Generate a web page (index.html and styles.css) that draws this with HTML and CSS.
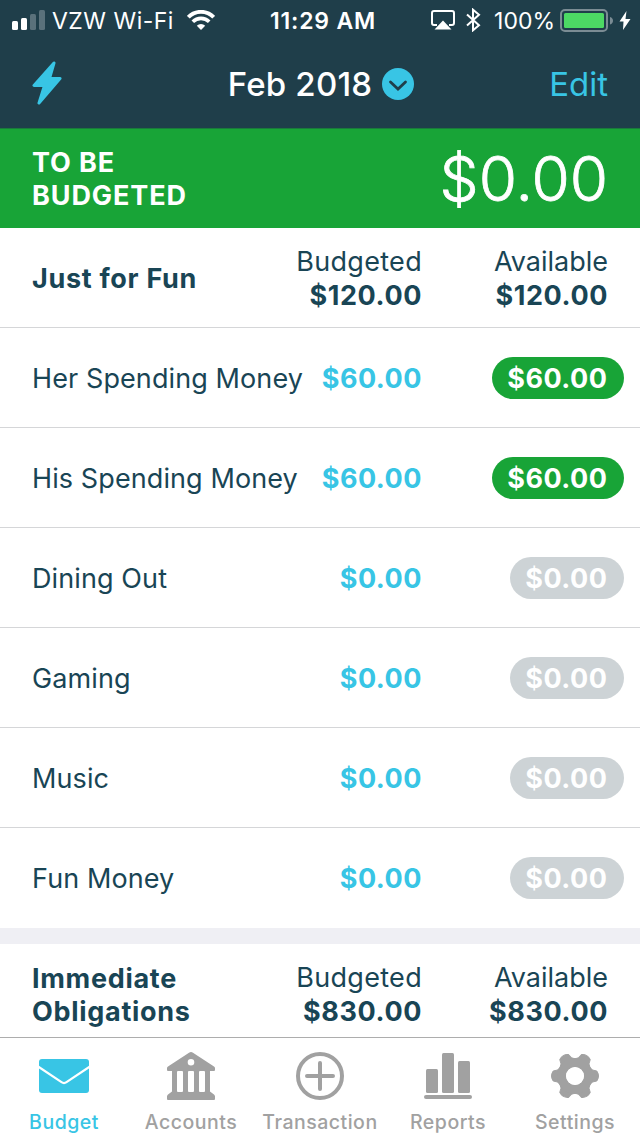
FILE: index.html
```html
<!DOCTYPE html>
<html lang="en">

<head>
    <meta charset="UTF-8">
    <meta name="viewport" content="width=device-width, initial-scale=1.0">
    <title>Budget</title>
    <link rel="stylesheet" href="styles.css">
</head>

<body>
    <div class="app">
        <header class="top">
            <div class="status">
                <div class="status-left">
                    <svg class="signal" width="34" height="20" viewBox="0 0 34 20">
                        <rect x="0" y="11" width="6" height="9" rx="1.5" fill="#fff" />
                        <rect x="9" y="8" width="6" height="12" rx="1.5" fill="#fff" />
                        <rect x="18" y="4" width="6" height="16" rx="1.5" fill="#5a717b" />
                        <rect x="27" y="0" width="6" height="20" rx="1.5" fill="#5a717b" />
                    </svg>
                    <span class="carrier">VZW Wi-Fi</span>
                    <svg class="wifi" width="28" height="20" viewBox="0 0 28 20">
                        <path d="M1.300 7.200a17.800 17.800 0 0 1 25.400 0" fill="none" stroke="#fff" stroke-width="4" />
                        <path d="M5.800 11.800a11.500 11.500 0 0 1 16.400 0" fill="none" stroke="#fff" stroke-width="3.600" />
                        <path d="M14 20l-4.200-4.300a6 6 0 0 1 8.400 0z" fill="#fff" />
                    </svg>
                </div>
                <span class="clock">11:29 AM</span>
                <div class="status-right">
                    <svg class="airplay" width="24" height="20" viewBox="0 0 24 20">
                        <path d="M6 15H3a2 2 0 0 1-2-2V3a2 2 0 0 1 2-2h18a2 2 0 0 1 2 2v10a2 2 0 0 1-2 2h-3" fill="none" stroke="#fff" stroke-width="2" />
                        <path d="M12 10.500l8.500 9H3.500z" fill="#fff" />
                    </svg>
                    <svg class="bluetooth" width="15" height="24" viewBox="0 0 15 24">
                        <path d="M1 6.500l12 10.800-6 5V1.700l6 5L1 17.500" fill="none" stroke="#fff" stroke-width="2" />
                    </svg>
                    <span class="percent">100%</span>
                    <svg class="battery" width="54" height="23" viewBox="0 0 54 23">
                        <rect x="1" y="1" width="46" height="21" rx="4" fill="none" stroke="#7b8c94" stroke-width="2" />
                        <rect x="4" y="4" width="40" height="15" rx="1.500" fill="#4cd964" />
                        <path d="M50 8c4 1 4 6.500 0 7.500z" fill="#7b8c94" />
                    </svg>
                    <svg class="charge" width="12" height="19" viewBox="0 0 12 19">
                        <path d="M7.500 0L.5 10.500h4L4 19l7.500-11h-5z" fill="#fff" />
                    </svg>
                </div>
            </div>
            <nav class="nav">
                <svg class="bolt" width="30" height="44" viewBox="0 0 30 44">
                    <path d="M22 2L2 24.500h10.500L7 42l21-24.500H17.500L22 2z" fill="#38c5e5" stroke="#38c5e5" stroke-width="3" stroke-linejoin="round" />
                </svg>
                <div class="month">
                    <span>Feb 2018</span>
                    <svg width="32" height="32" viewBox="0 0 32 32">
                        <circle cx="16" cy="16" r="16" fill="#38c5e5" />
                        <path d="M8.500 14l7.500 7 7.500-7" fill="none" stroke="#1f3e4a" stroke-width="2.800" stroke-linecap="round" />
                    </svg>
                </div>
                <span class="edit">Edit</span>
            </nav>
        </header>

        <section class="banner">
            <div class="banner-label">TO BE<br>BUDGETED</div>
            <div class="banner-amount">$0.00</div>
        </section>

        <main class="list">
            <section class="group">
                <div class="row head">
                    <div class="name">Just for Fun</div>
                    <div class="budgeted"><span>Budgeted</span><b>$120.00</b></div>
                    <div class="available"><span>Available</span><b>$120.00</b></div>
                </div>
                <div class="row">
                    <div class="name">Her Spending Money</div>
                    <div class="budgeted">$60.00</div>
                    <div class="available"><span class="pill green">$60.00</span></div>
                </div>
                <div class="row">
                    <div class="name">His Spending Money</div>
                    <div class="budgeted">$60.00</div>
                    <div class="available"><span class="pill green">$60.00</span></div>
                </div>
                <div class="row">
                    <div class="name">Dining Out</div>
                    <div class="budgeted">$0.00</div>
                    <div class="available"><span class="pill">$0.00</span></div>
                </div>
                <div class="row">
                    <div class="name">Gaming</div>
                    <div class="budgeted">$0.00</div>
                    <div class="available"><span class="pill">$0.00</span></div>
                </div>
                <div class="row">
                    <div class="name">Music</div>
                    <div class="budgeted">$0.00</div>
                    <div class="available"><span class="pill">$0.00</span></div>
                </div>
                <div class="row">
                    <div class="name">Fun Money</div>
                    <div class="budgeted">$0.00</div>
                    <div class="available"><span class="pill">$0.00</span></div>
                </div>
            </section>
            <section class="group">
                <div class="row head">
                    <div class="name">Immediate<br>Obligations</div>
                    <div class="budgeted"><span>Budgeted</span><b>$830.00</b></div>
                    <div class="available"><span>Available</span><b>$830.00</b></div>
                </div>
            </section>
        </main>

        <footer class="tabs">
            <div class="tab active">
                <svg width="50" height="50" viewBox="0 0 50 50">
                    <rect x="0" y="8" width="50" height="34" rx="3" fill="currentColor" />
                    <path d="M-1 15.500L22.500 31.200q2.500 1.800 5 0L51 15.500" fill="none" stroke="#fff" stroke-width="2.200" />
                </svg>
                <span>Budget</span>
            </div>
            <div class="tab">
                <svg width="50" height="50" viewBox="0 0 50 50">
                    <path fill="currentColor" fill-rule="evenodd" d="M25 1q1 0 2 .7L48 15.500q1 .7 1 1.500v2q0 1-1 1h-4v20.500l4 3q1 .8 1 2V48q0 1-1 1H2q-1 0-1-1v-2.500q0-1.200 1-2l4-3V20H2q-1 0-1-1v-2q0-.8 1-1.500L23 1.700q1-.7 2-.7zM25 8a3.300 3.300 0 1 0 0 6.600A3.300 3.300 0 0 0 25 8zM12 20q-1 0-1 1v19q0 1 1 1h4q1 0 1-1V21q0-1-1-1zM23 20q-1 0-1 1v19q0 1 1 1h4q1 0 1-1V21q0-1-1-1zM34 20q-1 0-1 1v19q0 1 1 1h4q1 0 1-1V21q0-1-1-1z" />
                </svg>
                <span>Accounts</span>
            </div>
            <div class="tab">
                <svg width="50" height="50" viewBox="0 0 50 50">
                    <circle cx="25" cy="25" r="22" fill="none" stroke="currentColor" stroke-width="4" />
                    <path d="M25 12v26M12 25h26" stroke="currentColor" stroke-width="4" stroke-linecap="round" />
                </svg>
                <span>Transaction</span>
            </div>
            <div class="tab">
                <svg width="50" height="50" viewBox="0 0 50 50" fill="currentColor">
                    <rect x="3" y="18" width="12" height="24" rx="1.500" />
                    <rect x="19" y="2" width="12" height="40" rx="1.500" />
                    <rect x="35" y="10" width="12" height="32" rx="1.500" />
                    <rect x="1" y="44" width="48" height="4" rx="2" />
                </svg>
                <span>Reports</span>
            </div>
            <div class="tab">
                <svg width="50" height="50" viewBox="0 0 50 50">
                    <defs>
                        <path id="tooth" d="M15.500 11l3.500-3.500 1-4.300q2.500-1.700 5-1.700t5 1.700l1 4.300 3.500 3.500z" stroke-width="1" stroke-linejoin="round" />
                    </defs>
                    <g fill="currentColor" stroke="currentColor">
                        <use href="#tooth" transform="rotate(30 25 25)" />
                        <use href="#tooth" transform="rotate(90 25 25)" />
                        <use href="#tooth" transform="rotate(150 25 25)" />
                        <use href="#tooth" transform="rotate(210 25 25)" />
                        <use href="#tooth" transform="rotate(270 25 25)" />
                        <use href="#tooth" transform="rotate(330 25 25)" />
                    </g>
                    <circle cx="25" cy="25" r="13.300" fill="none" stroke="currentColor" stroke-width="9" />
                    <circle cx="25" cy="25" r="9" fill="#fff" />
                </svg>
                <span>Settings</span>
            </div>
        </footer>
    </div>
</body>

</html>
```
FILE: styles.css
```css
* {
    box-sizing: border-box;
}

body {
    margin: 0;
    font-family: Inter, "Liberation Sans", sans-serif;
    color: #194555;
    background-color: #fff;
}

svg {
    display: block;
    flex-shrink: 0;
}

.app {
    width: 640px;
    height: 1136px;
    display: flex;
    flex-direction: column;
    overflow: hidden;
}

/* header */
.top {
    height: 128px;
    background-color: #1f3e4a;
    color: #fff;
}

.status {
    height: 40px;
    display: grid;
    grid-template-columns: 1fr auto 1fr;
    align-items: center;
    font-size: 23px;
    line-height: 40px;
    padding: 0 9px 0 12px;
}

.status span {
    padding-top: 2px;
    line-height: 38px;
}

.status-left,
.status-right {
    display: flex;
    align-items: center;
}

.status-right {
    justify-content: flex-end;
}

.carrier {
    margin-left: 6px;
    letter-spacing: 0.5px;
}

.wifi {
    margin-left: 13px;
}

.clock {
    padding-left: 3px;
    font-weight: 600;
    letter-spacing: 0.8px;
}

.bluetooth {
    margin-left: 11px;
}

.percent {
    margin-left: 13px;
}

.battery {
    margin-left: 5px;
}

.charge {
    margin-left: 5px;
}

.nav {
    height: 88px;
    display: grid;
    grid-template-columns: 1fr auto 1fr;
    align-items: center;
    padding: 0 32px;
    font-size: 33px;
}

.bolt {
    margin-bottom: 2px;
}

.month {
    display: flex;
    align-items: center;
    gap: 10px;
    padding-left: 2px;
    font-weight: 500;
    letter-spacing: 0.2px;
}

.edit {
    color: #38c5e5;
    text-align: right;
}

/* to be budgeted */
.banner {
    height: 100px;
    display: flex;
    align-items: center;
    justify-content: space-between;
    padding: 0 32px;
    background-color: #18a437;
    border-top: 1px solid #1a7a3c;
    color: #fff;
}

.banner-label {
    font-size: 27px;
    font-weight: 700;
    line-height: 33px;
    letter-spacing: 0.9px;
}

.banner-amount {
    font-size: 62px;
    font-weight: 300;
    -webkit-text-stroke: 0.8px #fff;
}

/* categories */
.list {
    flex: 1;
    overflow: hidden;
    background-color: #efeff4;
}

.group {
    background-color: #fff;
    margin-bottom: 16px;
}

.row {
    height: 100px;
    display: flex;
    align-items: center;
    padding: 2px 16px 0 32px;
    border-bottom: 1px solid #d5d6d8;
    font-size: 27px;
    line-height: 34px;
}

.row:last-child {
    border-bottom-color: transparent;
}

.name {
    width: 269px;
    white-space: nowrap;
    letter-spacing: 0.1px;
}

.budgeted {
    width: 121px;
    display: flex;
    flex-direction: column;
    align-items: flex-end;
    color: #38c5e5;
    font-weight: 700;
    letter-spacing: 0.5px;
}

.available {
    flex: 1;
    display: flex;
    flex-direction: column;
    align-items: flex-end;
    font-weight: 700;
    letter-spacing: 0.5px;
}

.head .budgeted,
.head .available {
    color: inherit;
    font-weight: 400;
}

.head .budgeted {
    letter-spacing: 0.3px;
}

.head .available {
    padding-right: 16px;
    letter-spacing: 0;
}

.head b {
    font-weight: 700;
    letter-spacing: 0.6px;
}

.head .name {
    font-weight: 700;
    line-height: 33px;
    letter-spacing: 0.7px;
}

.pill {
    height: 42px;
    margin-top: -2px;
    padding: 1px 16.5px 0 15px;
    border-radius: 21px;
    line-height: 42px;
    color: #fff;
    background-color: #cdd3d6;
}

.green {
    background-color: #18a437;
}

/* tab bar */
.tabs {
    height: 99px;
    display: grid;
    grid-template-columns: 128px 126px 132px 124px 130px;
    border-top: 1px solid #adadad;
    background-color: #fff;
}

.tab {
    display: flex;
    flex-direction: column;
    align-items: center;
    padding-top: 13px;
    color: #a1a1a1;
    font-size: 19.5px;
    font-weight: 500;
    line-height: 24px;
}

.tab span {
    margin-top: 9px;
    letter-spacing: 0.5px;
}

.active {
    color: #38c5e5;
}
```
